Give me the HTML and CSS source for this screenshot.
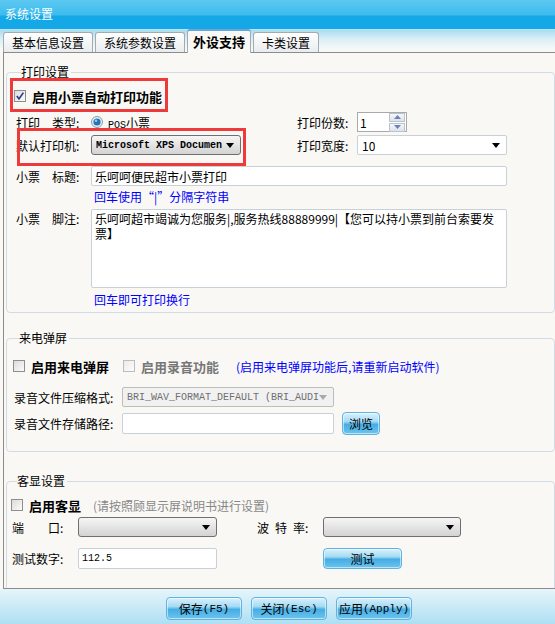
FILE: index.html
```html
<!DOCTYPE html>
<html lang="zh-CN">
<head>
    <meta charset="UTF-8">
    <title>系统设置</title>
    <link rel="stylesheet" href="styles.css">
</head>
<body>
    <div class="titlebar">系统设置</div>

    <div class="tabbar">
        <div class="tab">基本信息设置</div>
        <div class="tab">系统参数设置</div>
        <div class="tab active">外设支持</div>
        <div class="tab">卡类设置</div>
    </div>

    <div class="panel">
        <!-- 打印设置 -->
        <fieldset class="group g-print">
            <legend>打印设置</legend>
            <div class="row check-row first">
                <span class="cb checked"><svg width="10" height="10" viewBox="0 0 10 10"><path d="M1.8 5 L4 7.8 L8.4 1.6" fill="none" stroke="#2b3c8c" stroke-width="1.6"/></svg></span>
                <b>启用小票自动打印功能</b>
            </div>
            <div class="row r-type">
                <span class="lbl">打印　类型:</span>
                <span class="cell">
                    <svg class="radio" width="12" height="12" viewBox="0 0 12 12">
                        <circle cx="6" cy="6" r="5.5" fill="#e9eef2" stroke="#8d9aa6"/>
                        <circle cx="6" cy="6" r="3.6" fill="#1f75b8"/>
                        <circle cx="5" cy="4.8" r="1.3" fill="#8fd0f5"/>
                    </svg>
                    <span><span class="mono">POS</span>小票</span>
                </span>
                <span class="lbl-r">打印份数:</span>
                <span class="spin">
                    <span class="val">1</span>
                    <span class="spin-btns">
                        <span class="sb"><svg width="7" height="4" viewBox="0 0 7 4"><path d="M0 4 L3.5 0 L7 4Z" fill="#6f80b3"/></svg></span>
                        <span class="sb"><svg width="7" height="4" viewBox="0 0 7 4"><path d="M0 0 L3.5 4 L7 0Z" fill="#6f80b3"/></svg></span>
                    </span>
                </span>
            </div>
            <div class="row r-printer">
                <span class="lbl">默认打印机:</span>
                <span class="cell">
                    <span class="select dark w150"><span class="val mono">Microsoft XPS Documen</span><span class="arrow"></span></span>
                </span>
                <span class="lbl-r">打印宽度:</span>
                <span class="select white w150"><span class="val">10</span><span class="arrow"></span></span>
            </div>
            <div class="row r-title">
                <span class="lbl">小票　标题:</span>
                <span class="input w416">乐呵呵便民超市小票打印</span>
            </div>
            <div class="hint">回车使用“|”分隔字符串</div>
            <div class="row r-foot">
                <span class="lbl">小票　脚注:</span>
                <div class="textarea">乐呵呵超市竭诚为您服务|,服务热线88889999|【您可以持小票到前台索要发<br>票】</div>
            </div>
            <div class="hint">回车即可打印换行</div>
        </fieldset>

        <!-- 来电弹屏 -->
        <fieldset class="group g-call">
            <legend>来电弹屏</legend>
            <div class="row check-row">
                <span class="cb"></span>
                <b>启用来电弹屏</b>
                <span class="cb disabled second"></span>
                <b class="muted">启用录音功能</b>
                <span class="note">(启用来电弹屏功能后,请重新启动软件)</span>
            </div>
            <div class="row r-format">
                <span class="lbl">录音文件压缩格式:</span>
                <span class="select disabled w212"><span class="val mono">BRI_WAV_FORMAT_DEFAULT (BRI_AUDI</span><span class="arrow"></span></span>
            </div>
            <div class="row r-path">
                <span class="lbl">录音文件存储路径:</span>
                <span class="input w212"></span>
                <span class="btn browse">浏览</span>
            </div>
        </fieldset>

        <!-- 客显设置 -->
        <fieldset class="group g-disp">
            <legend>客显设置</legend>
            <div class="row check-row">
                <span class="cb"></span>
                <b>启用客显</b>
                <span class="gray-note">(请按照顾显示屏说明书进行设置)</span>
            </div>
            <div class="row r-port">
                <span class="lbl">端　　口:</span>
                <span class="select dark w139"><span class="val"></span><span class="arrow"></span></span>
                <span class="lbl lbl-2">波&ensp;特&ensp;率:</span>
                <span class="select dark w138"><span class="val"></span><span class="arrow"></span></span>
            </div>
            <div class="row r-test">
                <span class="lbl">测试数字:</span>
                <span class="input w139 mono">112.5</span>
                <span class="btn test">测试</span>
            </div>
        </fieldset>
    </div>

    <div class="footer">
        <span class="btn big">保存<span class="mono">(F5)</span></span>
        <span class="btn big">关闭<span class="mono">(Esc)</span></span>
        <span class="btn big">应用<span class="mono">(Apply)</span></span>
    </div>

    <!-- red annotation frames -->
    <div class="mark mark-1"></div>
    <div class="mark mark-2"></div>
</body>
</html>
```

FILE: styles.css
```css
body {
    margin: 0;
    width: 555px;
    height: 624px;
    overflow: hidden;
    position: relative;
    font-family: "Noto Sans CJK SC", "Liberation Sans", sans-serif;
    font-size: 12px;
    color: #000;
    background: #f9f8f5;
}
.mono {
    font-family: "Liberation Mono", "Noto Sans CJK SC", monospace;
    font-size: 10px;
}

/* title + tabs */
.titlebar {
    height: 29px;
    line-height: 28px;
    padding-left: 5px;
    color: #fff;
    background: linear-gradient(#5cc8f1 0, #3dbcee 15px, #14a8e6 16px, #14a8e6 29px);
}
.tabbar {
    height: 23px;
    display: flex;
    align-items: flex-end;
    gap: 2px;
    padding-left: 3px;
    background: linear-gradient(#cbeef9 0, #aadcef 1px, #d9eff5 10px, #f6f9f8 20px);
}
.tab {
    height: 19px;
    line-height: 19px;
    padding: 0 8px;
    border: 1px solid #a3abb2;
    border-bottom: none;
    border-radius: 3px 3px 0 0;
    background: linear-gradient(#ffffff, #e9ecee);
}
.tab.active {
    height: 22px;
    line-height: 22px;
    padding: 0 5px;
    font-weight: bold;
    font-size: 13px;
    border-top: 2px solid #6aa6d8;
    background: #f9f8f5;
    margin-bottom: -1px;
    position: relative;
    z-index: 1;
}

/* main panel */
.panel {
    margin-left: 3px;
    height: 535px;
    border-top: 1px solid #8c8c8c;
    border-left: 1px solid #8c8c8c;
    border-bottom: 1px solid #8c8c8c;
    background: #f9f8f5;
    overflow: hidden;
}
.group {
    margin: 0 0 0 2px;
    padding: 0;
    min-width: 0;
    border: 1px solid #d2dae4;
    border-radius: 4px;
}
.group legend {
    margin-left: 5px;
    padding: 0 2px 0 0;
    line-height: 14px;
}
.g-print { margin-top: 12px; padding: 0 0 4px 9px; }
.g-call { margin-top: 18px; padding: 0 0 17px 7px; }
.g-disp { margin-top: 22px; padding: 0 0 40px 5px; }

.row {
    display: flex;
    align-items: center;
    height: 20px;
}
.lbl { width: 75px; flex: none; }
.g-call .lbl { width: 108px; }
.g-disp .lbl { width: 66px; }
.g-disp .lbl-2 { margin-left: 40px; }
.cell { width: 206px; display: flex; align-items: center; flex: none; }
.lbl-r { width: 60px; flex: none; }

.check-row b { font-size: 13px; }
.g-print .check-row { margin-left: -2px; }
.g-call .check-row, .g-disp .check-row { margin-left: -1px; }
.first { margin-top: 7px; }
.r-type { margin-top: 6px; }
.r-printer { margin-top: 3px; }
.r-title { margin-top: 11px; }
.r-foot { margin-top: 4px; height: 79px; align-items: flex-start; }
.r-foot .lbl { padding-top: 1px; }
.g-call .check-row { margin-top: 11px; }
.r-format { margin-top: 11px; }
.r-path { margin-top: 6px; height: 21px; }
.g-disp .check-row { margin-top: 7px; }
.r-port { margin-top: 2px; }
.r-test { margin-top: 11px; height: 21px; }

/* check boxes */
.cb {
    width: 10px;
    height: 10px;
    border: 1px solid #8e8e8e;
    background: linear-gradient(135deg, #dcdcdc, #fbfbfb);
    display: inline-flex;
    align-items: center;
    justify-content: center;
    margin-right: 6px;
    flex: none;
}
.cb.disabled {
    border-color: #bcbcbc;
    background: linear-gradient(135deg, #ececec, #fbfbfb);
}
.cb.second { margin-left: 14px; }
.muted { color: #777; }
.note { color: #0000ff; margin-left: 17px; }
.gray-note { color: #888; margin-left: 12px; }

.radio { margin-right: 5px; }

/* fields */
.input, .select, .spin {
    box-sizing: border-box;
    display: flex;
    align-items: center;
    height: 20px;
    flex: none;
}
.input {
    background: #fff;
    border: 1px solid #c8d0d8;
    border-radius: 2px;
    padding-left: 3px;
    height: 21px;
}
.r-title .input { height: 20px; }
.w416 { width: 416px; }
.w212 { width: 212px; }
.w150 { width: 150px; }
.w139 { width: 139px; }
.w138 { width: 138px; }
.textarea {
    box-sizing: border-box;
    width: 416px;
    height: 79px;
    flex: none;
    background: #fff;
    border: 1px solid #c8d0d8;
    border-radius: 2px;
    padding: 1px 3px;
    line-height: 15px;
}
.spin {
    width: 50px;
    height: 20px;
    border: 1px solid #a9a9a9;
    background: #fff;
    padding-left: 2px;
    justify-content: space-between;
}
.spin-btns {
    display: flex;
    flex-direction: column;
    gap: 1px;
    padding-right: 1px;
}
.sb {
    width: 14px;
    height: 7px;
    border: 1px solid #b9c3cf;
    background: linear-gradient(#f5f7fa, #dde3ea);
    display: flex;
    align-items: center;
    justify-content: center;
}
.select {
    justify-content: space-between;
    padding: 0 6px 0 4px;
    border-radius: 3px;
}
.select .val { overflow: hidden; white-space: nowrap; }
.select .arrow {
    width: 0;
    height: 0;
    border-left: 4px solid transparent;
    border-right: 4px solid transparent;
    border-top: 5px solid #000;
    flex: none;
}
.select.dark {
    border: 1px solid #6f6f6f;
    background: linear-gradient(#f6f6f6, #e4e4e4 50%, #d3d3d3);
}
.select.dark .val.mono { font-weight: bold; }
.select.white {
    border: 1px solid #c8d0d8;
    background: #fff;
    border-radius: 2px;
}
.select.disabled {
    border: 1px solid #bdbdbd;
    background: #f1f1f1;
    color: #6f6f6f;
    border-radius: 2px;
}
.select.disabled .arrow { border-top-color: #a9a9a9; }

.hint {
    color: #0000ff;
    height: 16px;
    line-height: 16px;
    margin: 3px 0 0 78px;
}
.r-foot + .hint { margin-top: 4px; }

/* buttons */
.btn {
    box-sizing: border-box;
    display: inline-flex;
    align-items: center;
    justify-content: center;
    white-space: nowrap;
    border: 1px solid #5db4e3;
    border-radius: 4px;
    box-shadow: inset 0 0 0 1px rgba(255, 255, 255, 0.55);
    background: linear-gradient(#d9f1fc 0, #a6dbf4 40%, #45ade4 55%, #6ec4ee 100%);
    flex: none;
}
.btn .mono { font-size: 11px; }
.browse { width: 38px; height: 23px; margin-left: 8px; }
.test { width: 79px; height: 21px; margin-left: 106px; }

.footer {
    height: 35px;
    display: flex;
    align-items: flex-start;
    gap: 9px;
    padding-left: 166px;
    padding-top: 8px;
    box-sizing: border-box;
    background: linear-gradient(#e6f5fa, #aedff3);
}
.btn.big { width: 76px; height: 23px; }

/* annotations */
.mark {
    position: absolute;
    border: 3px solid #ee3a3a;
}
.mark-1 { left: 10px; top: 78px; width: 152px; height: 28px; }
.mark-2 { left: 17px; top: 128px; width: 223px; height: 32px; }
```
